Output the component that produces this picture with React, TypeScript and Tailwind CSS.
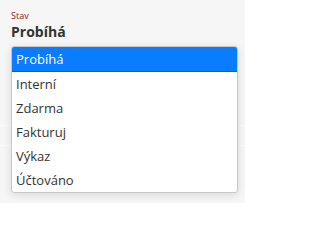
export default function App() {
  const items = ["Interní", "Zdarma", "Fakturuj", "Výkaz", "Účtováno"];
  return (
    <div className="w-[254px] h-[213px] bg-white" style={{ fontFamily: '"Open Sans", sans-serif' }}>
      <div className="relative flex flex-col w-[245px] h-[203px] bg-[#f6f6f6]">
        <div className="flex flex-col h-[126px] border-b border-[#fbfbfb] pl-[11px] pt-[10px]">
          <span className="text-[9px] leading-[12px] text-[#8b1c1c]">Stav</span>
          <span className="text-[14px] leading-[20px] font-bold text-[#333]">Probíhá</span>
        </div>
        <div className="h-[20px] border-b border-[#fbfbfb]" />
        <div className="absolute left-[11px] top-[46px] flex flex-col w-[227px] rounded-[3px] border border-[#c8c8c8] bg-white shadow-[0_2px_8px_rgba(0,0,0,0.12)] overflow-hidden">
          <div className="h-[25px] bg-[#0a7cff] border-b border-[#0a5fd0] pl-[4px] text-[13px] leading-[24px] text-white">Probíhá</div>
          {items.map((t) => (
            <div key={t} className="h-[24px] pl-[4px] text-[13px] leading-[24px] text-[#333]">
              {t}
            </div>
          ))}
        </div>
      </div>
    </div>
  );
}
